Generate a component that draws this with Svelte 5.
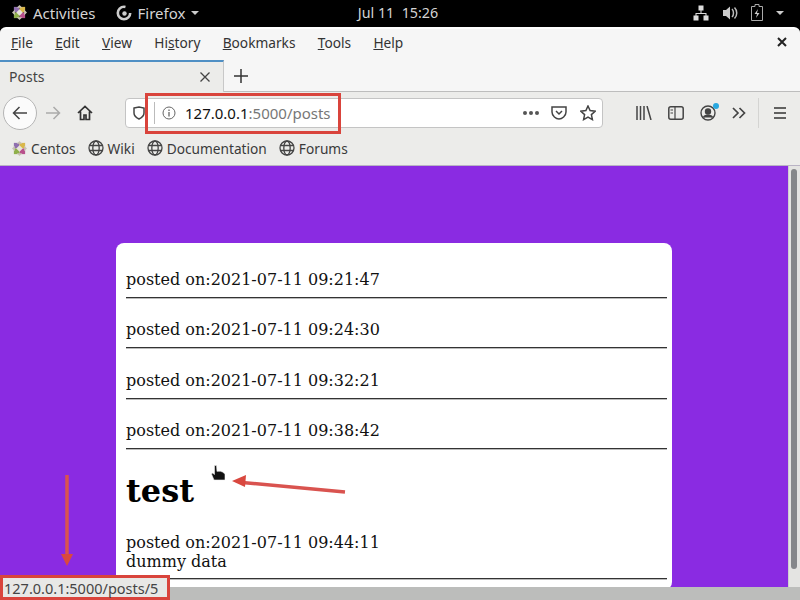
<script>
	const menus = [
		{ key: 'F', rest: 'ile' },
		{ key: 'E', rest: 'dit' },
		{ key: 'V', rest: 'iew' },
		{ pre: 'Hi', key: 's', rest: 'tory' },
		{ key: 'B', rest: 'ookmarks' },
		{ key: 'T', rest: 'ools' },
		{ key: 'H', rest: 'elp' }
	];
	const bookmarks = ['Wiki', 'Documentation', 'Forums'];
	const posts = ['09:21:47', '09:24:30', '09:32:21', '09:38:42'];
</script>

{#snippet centos(size)}
	<svg viewBox="0 0 16 16" width={size} height={size}>
		<rect x="2" y="2" width="6" height="6" fill="#8f6fb0" />
		<rect x="8" y="2" width="6" height="6" fill="#d9b84a" />
		<rect x="8" y="8" width="6" height="6" fill="#b8508c" />
		<rect x="2" y="8" width="6" height="6" fill="#8fb04a" />
		<path d="M8 0l3 3H5zM16 8l-3 3V5zM8 16l-3-3h6zM0 8l3-3v6z" fill="#c9c3b4" />
		<path d="M8 4.500L11.500 8 8 11.500 4.500 8z" fill="#e8e4da" />
	</svg>
{/snippet}

<div class="screen">
	<header class="topbar">
		<div class="top-left">
			<span class="centos">{@render centos(15)}</span>
			<span>Activities</span>
			<svg class="ff" viewBox="0 0 16 16" width="16" height="16">
				<circle cx="8" cy="8" r="6.200" fill="none" stroke="#ccc" stroke-width="2.600" stroke-dasharray="30 9" />
				<circle cx="8.500" cy="8.500" r="2.200" fill="#ccc" />
			</svg>
			<span>Firefox</span>
			<i class="caret"></i>
		</div>
		<div class="clock">Jul 11&nbsp; 15:26</div>
		<div class="tray">
			<svg viewBox="0 0 16 16" width="16" height="16" fill="#ddd">
				<rect x="5.500" y="0.500" width="5" height="5" />
				<rect x="0.500" y="10.500" width="5" height="5" />
				<rect x="10.500" y="10.500" width="5" height="5" />
				<path d="M7.500 5h1v3h5v3h-1V9H3.500v2h-1V8h5z" />
			</svg>
			<svg viewBox="0 0 16 16" width="16" height="16" fill="#ccc">
				<path d="M1 5h3l4-3.500v13L4 11H1z" />
				<path d="M10 4c2 2 2 6 0 8M12.500 2.500c3 3 3 8 0 11" fill="none" stroke="#bbb" stroke-width="1.500" />
			</svg>
			<svg viewBox="0 0 12 17" width="12" height="17">
				<path d="M4 .5h4v2h3.500v14H.5v-14H4z" fill="none" stroke="#aaa" />
				<path d="M7 5L3.500 10H6l-1 4 3.500-5H6z" fill="#ccc" />
			</svg>
			<i class="caret tray-caret"></i>
		</div>
	</header>

	<div class="window">
		<nav class="menubar">
			<div class="menus">
				{#each menus as m}
					<span>{m.pre ?? ''}<u>{m.key}</u>{m.rest}</span>
				{/each}
			</div>
			<svg viewBox="0 0 10 10" width="10" height="10" stroke="#222" stroke-width="2">
				<path d="M1 1l8 8M9 1l-8 8" />
			</svg>
		</nav>

		<div class="tabbar">
			<div class="tab">
				<span>Posts</span>
				<svg viewBox="0 0 10 10" width="10" height="10" stroke="#444" stroke-width="1.300">
					<path d="M.5 .5l9 9M9.500 .5l-9 9" />
				</svg>
			</div>
			<svg class="plus" viewBox="0 0 14 14" width="14" height="14" stroke="#333" stroke-width="1.500">
				<path d="M7 0v14M0 7h14" />
			</svg>
		</div>

		<div class="navbar">
			<button class="back" aria-label="Back">
				<svg viewBox="0 0 16 16" width="16" height="16" fill="none" stroke="#444" stroke-width="1.500">
					<path d="M15 8H1.500M7.500 2l-6 6 6 6" />
				</svg>
			</button>
			<svg class="fwd" viewBox="0 0 16 16" width="16" height="16" fill="none" stroke="#aaa" stroke-width="1.500">
				<path d="M1 8h13.500M8.500 2l6 6-6 6" />
			</svg>
			<svg class="home" viewBox="0 0 16 16" width="16" height="16" fill="none" stroke="#333" stroke-width="1.700">
				<path d="M1 8l7-6.500L15 8M3.500 6.500V14.500H7V10h2v4.500h3.500V6.500" />
			</svg>
			<div class="urlbar">
				<svg class="shield" viewBox="0 0 12 14" width="12" height="14" fill="none" stroke="#444" stroke-width="1.500">
					<path d="M1 2l5-1 5 1v5c0 3-3 5-5 6-2-1-5-3-5-6z" />
				</svg>
				<i class="sep"></i>
				<svg class="info" viewBox="0 0 14 14" width="14" height="14" fill="none" stroke="#666">
					<circle cx="7" cy="7" r="6" />
					<path d="M7 6v4.500M7 3.500v1.500" stroke-width="1.300" />
				</svg>
				<span class="url"><b>127.0.0.1</b>:5000/posts</span>
				<span class="dots">
					<i></i><i></i><i></i>
				</span>
				<svg class="pocket" viewBox="0 0 16 14" width="16" height="14" fill="none" stroke="#444" stroke-width="1.500">
					<path d="M1 1h14v5c0 4-4 7-7 7s-7-3-7-7z" />
					<path d="M5 5l3 3 3-3" />
				</svg>
				<svg class="star" viewBox="0 0 16 16" width="16" height="16" fill="none" stroke="#444" stroke-width="1.500">
					<path d="M8 1l2.100 4.600 5 .6-3.700 3.400 1 5L8 12.100 3.600 14.600l1-5L.9 6.200l5-.6z" />
				</svg>
			</div>
			<div class="tools">
				<svg viewBox="0 0 16 14" width="16" height="14" fill="none" stroke="#444" stroke-width="1.500">
					<path d="M1 0v14M4.500 0v14M8 0v14M11 0l4 14" />
				</svg>
				<svg viewBox="0 0 16 14" width="16" height="14" fill="none" stroke="#444" stroke-width="1.500">
					<rect x=".8" y=".8" width="14.400" height="12.400" rx="2" />
					<path d="M7 1v12M2.500 4h2.500M2.500 7h2.500" stroke-width="1.200" />
				</svg>
				<div class="account">
					<svg viewBox="0 0 16 16" width="16" height="16" fill="none" stroke="#444" stroke-width="1.400">
						<circle cx="8" cy="8" r="7" />
						<circle cx="8" cy="6.500" r="2.500" fill="#444" />
						<path d="M3.500 12.500c1-3 8-3 9 0" fill="#444" />
					</svg>
					<i class="dot"></i>
				</div>
				<svg viewBox="0 0 14 12" width="14" height="12" fill="none" stroke="#444" stroke-width="1.700">
					<path d="M1 1l5 5-5 5M7.500 1l5 5-5 5" />
				</svg>
			</div>
			<i class="toolsep"></i>
			<svg class="burger" viewBox="0 0 14 12" width="14" height="12" stroke="#333" stroke-width="1.600">
				<path d="M1 1h12M1 6h12M1 11h12" />
			</svg>
		</div>

		<div class="bookmarks">
			<span class="bm">
				{@render centos(15)}
				Centos
			</span>
			{#each bookmarks as b}
				<span class="bm">
					<svg viewBox="0 0 16 16" width="16" height="16" fill="none" stroke="#444" stroke-width="1.300">
						<circle cx="8" cy="8" r="7" />
						<ellipse cx="8" cy="8" rx="3.200" ry="7" />
						<path d="M1.500 5.500h13M1.500 10.500h13" />
					</svg>
					{b}
				</span>
			{/each}
		</div>

		<div class="viewport">
			<main class="page">
				<section class="card">
					{#each posts as time}
						<div class="post">
							<p>posted on:2021-07-11 {time}</p>
							<hr />
						</div>
					{/each}
					<div class="post last">
						<h2>test</h2>
						<p>posted on:2021-07-11 09:44:11</p>
						<p>dummy data</p>
						<hr />
					</div>
				</section>
			</main>
			<aside class="vscroll"><i></i></aside>
		</div>
		<div class="hscroll"></div>
	</div>

	<div class="urlhighlight"></div>
	<div class="status">127.0.0.1:5000/posts/5</div>

	<svg class="cursor" viewBox="0 0 14 16" width="14" height="16">
		<path d="M3.500 .5h2l.5 6 1-.5 1 .5 1-.500 1 .5 1.500.5L14 9v6H3L.5 9l1-1 2 1.500z" fill="#111" stroke="#eee" stroke-width=".6" />
	</svg>

	<svg class="arrows" viewBox="0 0 800 600" width="800" height="600">
		<path d="M345 492L242 482.500" stroke="#d9534f" stroke-width="3.500" />
		<path d="M232 481l14-6-1 12z" fill="#d9483f" />
		<path d="M67 475V555" stroke="#d9534f" stroke-width="3.500" />
		<path d="M61 554h12l-6 12z" fill="#d9483f" />
	</svg>
</div>

<style>
	:global(body) {
		margin: 0;
		background: #000;
	}

	.screen {
		position: relative;
		width: 800px;
		height: 600px;
		overflow: hidden;
		display: flex;
		flex-direction: column;
		font-family: 'Noto Sans', 'Open Sans', sans-serif;
	}

	.topbar {
		height: 27px;
		flex: none;
		box-sizing: border-box;
		display: grid;
		grid-template-columns: 1fr auto 1fr;
		align-items: center;
		padding: 0 16px 2px 12px;
		background: #000;
		color: #d4d4d4;
		font-size: 15px;
	}
	.top-left {
		display: flex;
		align-items: center;
	}
	.centos {
		display: flex;
		margin-right: 6px;
	}
	.ff {
		margin: 0 6px 0 20px;
	}
	.caret {
		width: 0;
		height: 0;
		margin-left: 6px;
		border: 4px solid transparent;
		border-top: 4px solid #ccc;
		border-bottom: 0;
	}
	.clock {
		font-size: 14.300px;
	}
	.tray {
		display: flex;
		align-items: center;
		justify-content: flex-end;
		gap: 13px;
	}
	.tray-caret {
		margin-left: 0;
	}

	.window {
		flex: 1;
		min-height: 0;
		display: flex;
		flex-direction: column;
		border-radius: 6px 6px 0 0;
		overflow: hidden;
		background: #f5f5f5;
		border-top: 2px solid #fff;
	}

	.menubar {
		height: 31px;
		flex: none;
		box-sizing: border-box;
		display: flex;
		align-items: center;
		justify-content: space-between;
		padding: 0 13px 5px 11px;
		font-size: 13.700px;
		color: #333;
		background: #f6f6f6;
	}
	.menus {
		display: flex;
		gap: 22.300px;
	}

	.tabbar {
		height: 32px;
		flex: none;
		display: flex;
		align-items: center;
		background: #f6f6f6;
		border-bottom: 1px solid #bdbdbd;
		box-sizing: border-box;
	}
	.tab {
		width: 224px;
		height: 32px;
		box-sizing: border-box;
		display: flex;
		align-items: center;
		justify-content: space-between;
		padding: 0 13px 0 9px;
		border-top: 2px solid #4f8fc4;
		border-right: 1px solid #c8c8c8;
		background: #ececea;
		font-size: 14px;
		color: #444;
	}
	.plus {
		margin-left: 10px;
	}

	.navbar {
		height: 41px;
		flex: none;
		display: flex;
		align-items: center;
		background: #ececea;
		padding-left: 3px;
	}
	.back {
		width: 34px;
		height: 34px;
		padding: 0;
		display: flex;
		align-items: center;
		justify-content: center;
		border: 1px solid #b5b5b5;
		border-radius: 50%;
		background: #fbfbfb;
	}
	.fwd {
		margin-left: 8px;
	}
	.home {
		margin-left: 16px;
	}
	.urlbar {
		width: 478px;
		height: 30px;
		margin-left: 32px;
		box-sizing: border-box;
		display: flex;
		align-items: center;
		background: #fff;
		border: 1px solid #c4c4c4;
		border-radius: 4px;
		padding-left: 7px;
		font-size: 15px;
	}
	.sep {
		width: 1px;
		height: 22px;
		margin-left: 9px;
		background: #bbb;
	}
	.info {
		margin-left: 7px;
	}
	.url {
		margin-left: 9px;
		color: #777;
	}
	.url b {
		font-weight: 400;
		color: #111;
	}
	.dots {
		margin-left: auto;
		display: flex;
		gap: 2px;
	}
	.dots i {
		width: 4px;
		height: 4px;
		border-radius: 50%;
		background: #555;
	}
	.pocket {
		margin-left: 12px;
	}
	.star {
		margin: 0 6px 0 13px;
	}
	.tools {
		display: flex;
		align-items: center;
		gap: 16px;
		margin-left: 33px;
	}
	.account {
		position: relative;
		display: flex;
	}
	.dot {
		position: absolute;
		top: -2px;
		right: -3px;
		width: 6px;
		height: 6px;
		border-radius: 50%;
		background: #29a8e0;
	}
	.toolsep {
		width: 1px;
		height: 30px;
		margin-left: 12px;
		background: #d4d4d2;
	}
	.burger {
		margin-left: 14px;
	}

	.bookmarks {
		height: 33px;
		flex: none;
		display: flex;
		align-items: center;
		gap: 12px;
		padding: 0 0 2px 12px;
		background: #ececea;
		font-size: 13.700px;
		color: #3a3a3a;
		border-bottom: 1px solid #b9b3c4;
		box-sizing: border-box;
	}
	.bm {
		display: flex;
		align-items: center;
		gap: 4px;
	}

	.viewport {
		flex: 1;
		min-height: 0;
		display: flex;
		overflow: hidden;
	}
	.page {
		flex: 1;
		min-width: 0;
		background: #8a2be2;
		padding-top: 77px;
		overflow: hidden;
	}
	.card {
		width: 556px;
		margin-left: 116px;
		box-sizing: border-box;
		padding: 11px 5px 10px 10px;
		background: #fff;
		border-radius: 8px;
		font-family: 'DejaVu Serif', serif;
		font-size: 16px;
		color: #111;
	}
	.post {
		height: 50.400px;
		padding-top: 16px;
		box-sizing: border-box;
	}
	.post p {
		margin: 0;
		line-height: 19px;
	}
	.post hr {
		margin: 8px 0 0;
		border: 0;
		border-top: 1px solid #333;
		border-bottom: 1px solid #bbb;
	}
	.post.last {
		height: auto;
		padding-top: 0;
	}
	.post.last hr {
		margin-top: 7px;
	}
	h2 {
		margin: 16px 0 23px;
		font-size: 32px;
		line-height: 38px;
		font-weight: 700;
		color: #000;
	}

	.vscroll {
		width: 12px;
		flex: none;
		box-sizing: border-box;
		padding: 3px 3px 18px 2px;
		background: #e4e4e2;
		border-left: 1px solid #cfcfcf;
	}
	.vscroll i {
		display: block;
		height: 100%;
		border-radius: 3px;
		background: #85878a;
	}
	.hscroll {
		height: 13px;
		flex: none;
		background: #bcbdbb;
	}

	.urlhighlight {
		position: absolute;
		left: 145px;
		top: 93px;
		width: 196px;
		height: 41px;
		box-sizing: border-box;
		border: 3px solid #d9443c;
	}
	.status {
		position: absolute;
		left: 0;
		top: 575px;
		width: 170px;
		height: 25px;
		box-sizing: border-box;
		padding-left: 1px;
		border: 3px solid #d9443c;
		background: #e8e8e6;
		color: #444;
		font-size: 14.500px;
		line-height: 20px;
		white-space: nowrap;
	}
	.cursor {
		position: absolute;
		left: 211px;
		top: 465px;
	}
	.arrows {
		position: absolute;
		left: 0;
		top: 0;
		pointer-events: none;
	}
</style>
